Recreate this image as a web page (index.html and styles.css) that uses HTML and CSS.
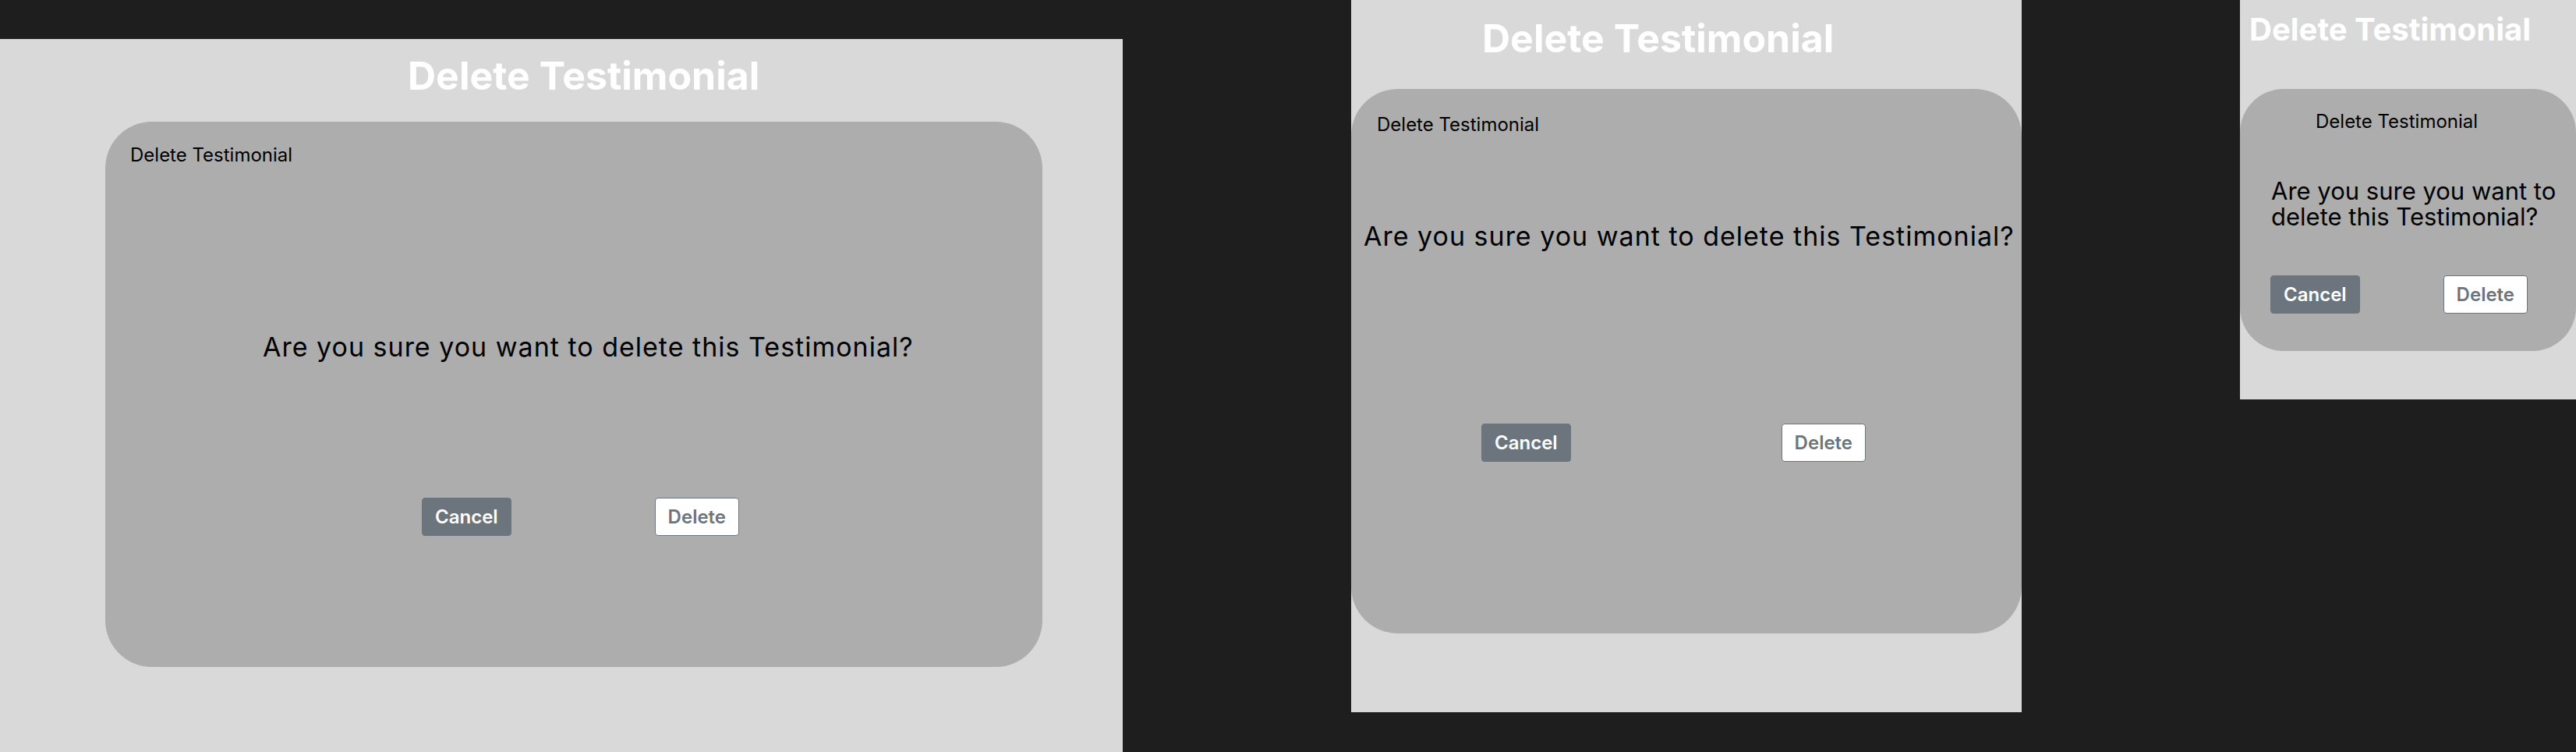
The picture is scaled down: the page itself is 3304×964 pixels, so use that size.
FILE: index.html
```html
<!DOCTYPE html>
<html lang="en">
<head>
<meta charset="utf-8">
<title>Delete Testimonial</title>
<link rel="stylesheet" href="styles.css">
</head>
<body>
<div class="stage">
  <section class="screen screen-lg">
    <h1 class="page-title">Delete Testimonial</h1>
    <div class="modal">
      <div class="modal-title">Delete Testimonial</div>
      <p class="modal-question">Are you sure you want to delete this Testimonial?</p>
      <div class="modal-actions">
        <button class="btn btn-cancel" type="button">Cancel</button>
        <button class="btn btn-delete" type="button">Delete</button>
      </div>
    </div>
  </section>
  <section class="screen screen-md">
    <h1 class="page-title">Delete Testimonial</h1>
    <div class="modal">
      <div class="modal-title">Delete Testimonial</div>
      <p class="modal-question">Are you sure you want to delete this Testimonial?</p>
      <div class="modal-actions">
        <button class="btn btn-cancel" type="button">Cancel</button>
        <button class="btn btn-delete" type="button">Delete</button>
      </div>
    </div>
  </section>
  <section class="screen screen-sm">
    <h1 class="page-title">Delete Testimonial</h1>
    <div class="modal">
      <div class="modal-title">Delete Testimonial</div>
      <p class="modal-question">Are you sure you want to delete this Testimonial?</p>
      <div class="modal-actions">
        <button class="btn btn-cancel" type="button">Cancel</button>
        <button class="btn btn-delete" type="button">Delete</button>
      </div>
    </div>
  </section>
</div>
</body>
</html>
```

FILE: styles.css
```css
html, body {
  margin: 0;
  padding: 0;
  background: #1e1e1e;
  font-family: Inter, "Noto Sans", "Liberation Sans", sans-serif;
  color: #000;
}

.stage {
  display: flex;
  align-items: flex-start;
  width: 3304px;
  height: 964px;
  overflow: hidden;
}

.screen {
  flex-shrink: 0;
  background: #d9d9d9;
  box-sizing: border-box;
  overflow: hidden;
}

.page-title {
  margin: 0;
  color: #ffffff;
  font-weight: 700;
  font-size: 50px;
  line-height: 60px;
  white-space: nowrap;
}

.modal {
  background: #adadad;
  box-sizing: border-box;
  display: flex;
  flex-direction: column;
  align-items: flex-start;
}

.modal-title {
  font-size: 24px;
  line-height: 29px;
  font-weight: 400;
  white-space: nowrap;
}

.modal-question {
  margin: 0;
  font-size: 34px;
  line-height: 41px;
  letter-spacing: 1px;
  font-weight: 400;
  white-space: nowrap;
}

.modal-actions {
  display: flex;
  align-items: center;
}

.btn {
  font-family: Inter, "Noto Sans", "Liberation Sans", sans-serif;
  font-size: 24px;
  line-height: 29px;
  font-weight: 600;
  padding: 9px 16px;
  border: 1px solid #6c757d;
  border-radius: 4px;
  margin: 0;
  cursor: pointer;
}

.btn-cancel {
  background: #6c757d;
  color: #ffffff;
}

.btn-delete {
  background: #ffffff;
  color: #6c757d;
}

/* large viewport */
.screen-lg {
  width: 1440px;
  height: 914px;
  margin-top: 50px;
}
.screen-lg .page-title {
  padding: 17px 0 0 523px;
}
.screen-lg .modal {
  margin: 29px 0 0 135px;
  width: 1202px;
  height: 699px;
  border-radius: 60px;
}
.screen-lg .modal-title {
  margin: 28px 0 0 32px;
}
.screen-lg .modal-question {
  margin: 211px 0 0 202px;
}
.screen-lg .modal-actions {
  margin: 173px 0 0 406px;
  gap: 184px;
}

/* medium viewport */
.screen-md {
  width: 860px;
  height: 913px;
  margin-left: 293px;
}
.screen-md .page-title {
  padding: 19px 0 0 168px;
}
.screen-md .modal {
  margin-top: 35px;
  width: 860px;
  height: 698px;
  border-radius: 60px;
}
.screen-md .modal-title {
  margin: 31px 0 0 33px;
}
.screen-md .modal-question {
  margin: 108px 0 0 16px;
}
.screen-md .modal-actions {
  margin: 220px 0 0 167px;
  gap: 270px;
}

/* small viewport */
.screen-sm {
  width: 431px;
  height: 512px;
  margin-left: 280px;
}
.screen-sm .page-title {
  font-size: 40px;
  line-height: 48px;
  padding: 14px 0 0 12px;
}
.screen-sm .modal {
  margin-top: 52px;
  width: 431px;
  height: 336px;
  border-radius: 56px;
}
.screen-sm .modal-title {
  margin: 27px 0 0 97px;
}
.screen-sm .modal-question {
  font-size: 31px;
  line-height: 33px;
  letter-spacing: 0;
  white-space: normal;
  margin: 58px 0 0 40px;
  width: 380px;
}
.screen-sm .modal-actions {
  margin: 59px 0 0 39px;
  gap: 107px;
}
```
